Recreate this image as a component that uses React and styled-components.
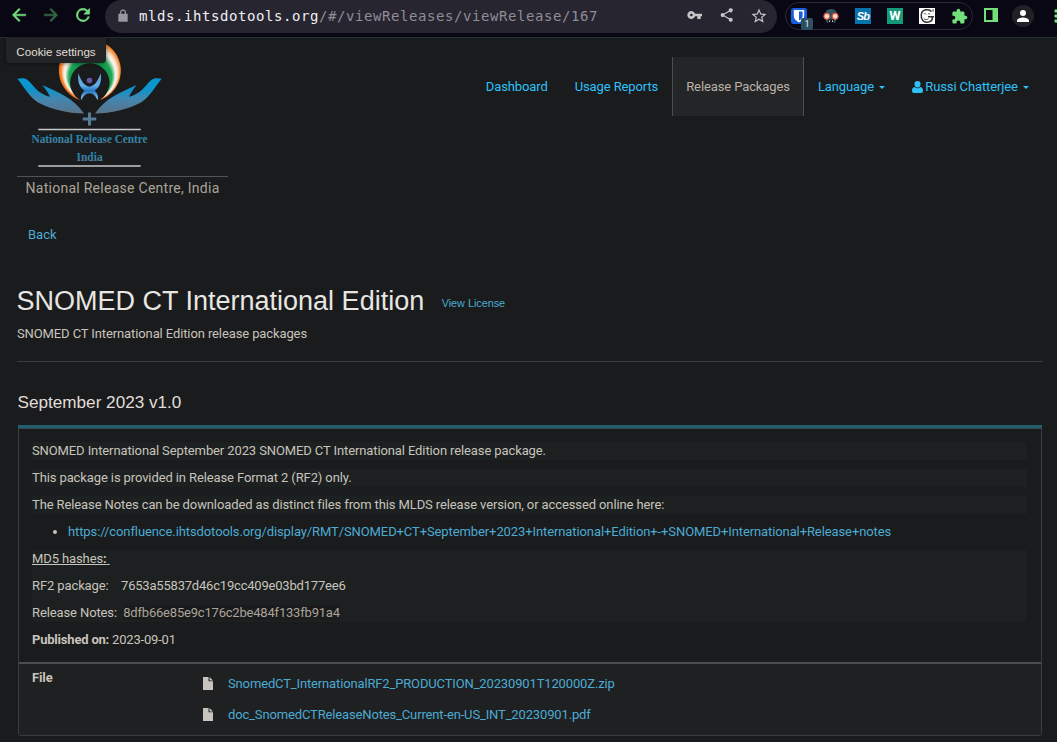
import React from "react";
import styled, { createGlobalStyle } from "styled-components";

const Global = createGlobalStyle`
  *, *::before, *::after { box-sizing: border-box; }
  body {
    margin: 0;
    background: #1a1b1c;
    color: #c8c3bc;
    font-family: Roboto, "Liberation Sans", sans-serif;
    font-size: 13px;
    line-height: 18px;
    letter-spacing: -0.11px;
    overflow: hidden;
  }
  p, h1, h2, ul { margin: 0; }
  a { color: #4cabd3; text-decoration: none; }
`;

const Screen = styled.div`
  width: 1057px;
  height: 742px;
  overflow: hidden;
`;

const Toolbar = styled.header`
  display: flex;
  align-items: flex-start;
  height: 38px;
  background: #0a0715;
  border-bottom: 1px solid #26302f;
  overflow: hidden;
`;

const NavButtons = styled.div`
  display: flex;
  width: 105px;
  padding: 5px 0 0 9px;
  gap: 12px;
  flex: none;
`;

const Icon = styled.svg`
  display: block;
  flex: none;
  width: ${(p) => p.$s || 20}px;
  height: ${(p) => p.$s || 20}px;
  fill: ${(p) => p.$c || "#72df7a"};
`;

const AddressBar = styled.div`
  display: flex;
  align-items: center;
  width: 672px;
  height: 33px;
  padding: 0 9px 1px 11px;
  border-radius: 17px;
  background: #272530;
  flex: none;
`;

const Url = styled.span`
  flex: 1;
  margin-left: 9px;
  font-family: "DejaVu Sans Mono", monospace;
  font-size: 14px;
  letter-spacing: 0.57px;
  color: #8f8d96;
  white-space: nowrap;
  b { font-weight: 400; color: #f0eff3; }
`;

const AddressActions = styled.div`
  display: flex;
  gap: 16px;
`;

const Extensions = styled.div`
  display: flex;
  align-items: center;
  gap: 16px;
  width: 188px;
  height: 28px;
  margin: 2px 0 0 8px;
  padding-left: 5px;
  border: 1px solid #2b2935;
  border-radius: 14px;
  flex: none;
`;

const ExtSlot = styled.span`
  position: relative;
  display: block;
  width: 16px;
  height: 16px;
  flex: none;
`;

const CountBadge = styled.span`
  position: absolute;
  left: 10px;
  top: 10px;
  width: 12px;
  height: 12px;
  border-radius: 2px;
  background: #2c505f;
  color: #e8eef0;
  font-size: 9px;
  line-height: 12px;
  text-align: center;
`;

const LetterTile = styled.span`
  display: block;
  width: 16px;
  height: 16px;
  background: ${(p) => p.$bg};
  color: ${(p) => p.$c || "#fff"};
  font: ${(p) => p.$font};
  line-height: 16px;
  letter-spacing: ${(p) => p.$ls || 0};
  text-align: center;
`;

const BrowserTail = styled.div`
  display: flex;
  align-items: center;
  margin: 4px 0 0 8px;
  height: 24px;
`;

const Avatar = styled.span`
  display: grid;
  place-items: center;
  width: 22px;
  height: 22px;
  margin-left: 11px;
  border-radius: 50%;
  background: #202124;
`;

const MenuDots = styled(Icon)`
  margin-left: 14px;
`;

const Page = styled.main`
  position: relative;
  height: 704px;
  padding: 0 15px 0 17px;
`;

const CookieButton = styled.button`
  position: absolute;
  left: 6px;
  top: 0;
  width: 100px;
  height: 25px;
  padding: 2px 0 1px;
  border: 0;
  border-radius: 0 0 4px 4px;
  background: #222425;
  box-shadow: 0 0 4px rgba(0, 0, 0, 0.6);
  color: #e0ddd9;
  font: 11.6px "Liberation Sans", sans-serif;
  white-space: nowrap;
`;

const Masthead = styled.div`
  display: flex;
  justify-content: space-between;
  height: 170px;
`;

const Brand = styled.div`
  width: 211px;
`;

const LogoMark = styled.svg`
  display: block;
  width: 146px;
  height: 138px;
`;

const BrandName = styled.div`
  border-top: 1px solid #505356;
  padding: 2px 0 0 8.5px;
  font-size: 14px;
  letter-spacing: 0.27px;
  color: #aba499;
  white-space: nowrap;
`;

const MainNav = styled.nav`
  display: flex;
  height: 59px;
  margin-top: 19px;
`;

const NavItem = styled.a`
  display: flex;
  align-items: center;
  height: 59px;
  padding: 0 13.5px;
  border: solid #4b4e50;
  border-width: ${(p) => (p.$active ? "0 1px" : "0")};
  background: ${(p) => (p.$active ? "#242527" : "transparent")};
  color: ${(p) => (p.$active ? "#b8b1a8" : "#2fc0f8")};
  white-space: nowrap;
`;

const Caret = styled.span`
  margin: 2px 0 0 4.6px;
  border: solid transparent;
  border-width: 3px 3px 0;
  border-top-color: currentColor;
`;

const UserGlyph = styled.svg`
  width: 11px;
  height: 12px;
  margin-right: 2.7px;
  fill: currentColor;
`;

const BackLink = styled.a`
  display: block;
  width: fit-content;
  margin: 18px 0 0 11px;
  letter-spacing: 0;
`;

const TitleRow = styled.div`
  display: flex;
  align-items: flex-start;
  gap: 17.5px;
  margin: 41px 0 0 -0.5px;
  font-family: "Liberation Sans", sans-serif;
  letter-spacing: 0;
`;

const Title = styled.h1`
  font-size: 27px;
  font-weight: 400;
  line-height: 32px;
  color: #e8e6e3;
  white-space: nowrap;
`;

const LicenseLink = styled.a`
  margin-top: 9px;
  font-size: 10.8px;
`;

const Summary = styled.p`
  margin-top: 8px;
  padding-bottom: 18px;
  border-bottom: 1px solid #3a3d3f;
  width: 1026px;
`;

const VersionTitle = styled.h2`
  margin: 30px 0 0 0.5px;
  font: 17.15px/20px "Liberation Sans", sans-serif;
  letter-spacing: 0;
  color: #e0ddd9;
`;

const ReleasePanel = styled.section`
  width: 1024px;
  margin: 13px 0 0 1px;
  border: 1px solid #3a3d3f;
  border-top: 0;
  border-radius: 0 0 3px 3px;
`;

const PanelAccent = styled.div`
  height: 4px;
  margin: 0 -1px;
  background: #235e6f;
  border-bottom: 1px solid #36474d;
`;

const Notes = styled.div`
  height: 233px;
  padding: 13px 14px 0 13px;
`;

const Line = styled.p`
  height: 18px;
  margin-bottom: 9px;
  background: #1c2020;
  white-space: pre;
`;

const LinkList = styled.ul`
  height: 18px;
  margin-bottom: 9px;
  padding-left: 36px;
  letter-spacing: -0.1px;
`;

const Hashes = styled.div`
  height: 72px;
  margin-bottom: 8px;
  background: #1c2020;
  white-space: pre;
  p { height: 27px; }
`;

const Underlined = styled.span`
  text-decoration: underline;
`;

const Digest = styled.span`
  letter-spacing: -0.2px;
  background: ${(p) => (p.$muted ? "#1a1b1c" : "transparent")};
  color: ${(p) => (p.$muted ? "#aba499" : "inherit")};
`;

const Published = styled.p`
  padding-top: 1px;
  letter-spacing: -0.2px;
`;

const Files = styled.div`
  display: flex;
  height: 73px;
  padding: 5px 13px 0;
  border-top: 2px solid #4a4d4f;
  background: #1f2021;
`;

const FilesLabel = styled.strong`
  width: 171px;
  font-weight: 700;
`;

const FileList = styled.div`
  display: flex;
  flex-direction: column;
  gap: 13px;
  padding-top: 6px;
  letter-spacing: -0.145px;
`;

const FileRow = styled.div`
  display: flex;
  align-items: center;
  gap: 15px;
  height: 18px;
`;

const FileGlyph = styled.svg`
  width: 10px;
  height: 13px;
  margin-bottom: 2px;
  fill: #c8c3bc;
`;

const Hand = "M17.3 78.7 C20 78.2 23 77.8 25.5 78.7 C33 82.5 34.5 92.5 50 96.7 C48 92.5 45 88 42.3 85 C59 92.5 73 98 84 113.4 C67 113.4 52 109.5 38 102.5 C27.5 95 25 87.5 17.3 78.7Z";

function ReleaseCentreLogo() {
  return (
    <LogoMark viewBox="17 38 146 138">
      <defs>
        <radialGradient id="tricolour" gradientUnits="userSpaceOnUse" cx="90.7" cy="70" r="31" fx="90.2" fy="81" fr="17">
          <stop offset="0" stopColor="#089447" />
          <stop offset="0.32" stopColor="#1fa858" />
          <stop offset="0.58" stopColor="#f6f6ee" />
          <stop offset="0.7" stopColor="#fbe6d2" />
          <stop offset="0.9" stopColor="#f58a35" />
          <stop offset="1" stopColor="#ee7420" />
        </radialGradient>
        <linearGradient id="hand" gradientUnits="userSpaceOnUse" x1="0" y1="78" x2="0" y2="125">
          <stop offset="0" stopColor="#0797d3" />
          <stop offset="0.23" stopColor="#0c94cc" />
          <stop offset="0.45" stopColor="#4386b0" />
          <stop offset="0.75" stopColor="#5a7388" />
          <stop offset="1" stopColor="#557d96" />
        </linearGradient>
        <linearGradient id="figure" x1="0" y1="0" x2="0" y2="1">
          <stop offset="0" stopColor="#5e9bd3" />
          <stop offset="0.45" stopColor="#62aee8" />
          <stop offset="0.65" stopColor="#2376c4" />
          <stop offset="1" stopColor="#a3cdf0" />
        </linearGradient>
        <linearGradient id="wordmark" x1="0" y1="0" x2="0" y2="1">
          <stop offset="0.2" stopColor="#168bbd" />
          <stop offset="0.85" stopColor="#527c99" />
        </linearGradient>
      </defs>
      <path fill="url(#tricolour)" d="M80 100 A31 31 0 1 1 99.7 100 A19.7 19.7 0 1 0 80 100Z" />
      <path fill="url(#hand)" d={Hand} />
      <path fill="url(#hand)" d={Hand} transform="matrix(-1 0 0 1 179 0)" />
      <circle cx="89.5" cy="80.5" r="2.8" fill="#6558a5" />
      <path fill="url(#figure)" d="M78.3 73.3 C80.500 78 82.500 85.500 89.500 86.800 C96.500 85.500 98.500 78 100.900 73.300 C101.800 82 99.500 87.500 94.800 90.700 C97.800 93.500 98.800 96.500 97.500 100.300 C95.800 96.200 93.500 93.400 89.500 93.300 C85.500 93.400 83.200 96.200 81.300 100.300 C80.200 96.500 81.500 93.500 84.500 90.700 C79.500 87.500 77.300 82 78.300 73.300Z" />
      <path fill="#557d96" d="M88 112.4h3v5.1h5.3v3H91v5.1h-3v-5.1h-5.3v-3H88z" />
      <path fill="#c5c9cb" d="M38.3 128.8h102.4v1.5H38.3zM38.3 165.2h102.4v1.5H38.3z" />
      <g fill="url(#wordmark)" fontFamily="'Liberation Serif', serif" fontWeight="700" fontSize="11.5" letterSpacing="0" textAnchor="middle">
        <text x="89.6" y="143.3" textLength="116" lengthAdjust="spacingAndGlyphs">National Release Centre</text>
        <text x="89.6" y="160.6" textLength="26" lengthAdjust="spacingAndGlyphs">India</text>
      </g>
    </LogoMark>
  );
}

function DocumentGlyph() {
  return (
    <FileGlyph viewBox="0 0 10 13">
      <path d="M0 0h5.500v4.300H10V13H0zM6.500 0L10 3.400H6.500z" />
    </FileGlyph>
  );
}

function BrowserToolbar() {
  return (
    <Toolbar>
      <NavButtons>
        <Icon viewBox="0 0 24 24"><path stroke="#72df7a" strokeWidth=".6" d="M20 11H7.83l5.59-5.59L12 4l-8 8 8 8 1.41-1.41L7.83 13H20z" /></Icon>
        <Icon viewBox="0 0 24 24" $c="#376a45"><path stroke="#376a45" strokeWidth=".6" d="M4 11h12.17l-5.59-5.59L12 4l8 8-8 8-1.41-1.41L16.17 13H4z" /></Icon>
        <Icon viewBox="0 0 24 24"><path stroke="#72df7a" strokeWidth=".6" d="M17.65 6.35A8 8 0 1 0 19.73 14h-2.08A6 6 0 1 1 12 6c1.66 0 3.14.69 4.22 1.78L13 11h7V4z" /></Icon>
      </NavButtons>
      <AddressBar>
        <Icon viewBox="0 0 24 24" $s={14} $c="#9998a0"><path d="M18 8h-1V6A5 5 0 0 0 7 6v2H4v14h16V8zM9 6a3 3 0 0 1 6 0v2H9z" /></Icon>
        <Url><b>mlds.ihtsdotools.org</b>/#/viewReleases/viewRelease/167</Url>
        <AddressActions>
          <Icon viewBox="-1 0 24 24" $s={16} $c="#c5c4c7"><path d="M12.65 10A6 6 0 1 0 12.65 14H16v4h5v-4h2v-4zM7 14a2 2 0 1 1 0-4 2 2 0 0 1 0 4z" /></Icon>
          <Icon viewBox="-1 0 24 24" $s={16} $c="#c5c4c7"><path d="M18 16.1c-.8 0-1.4.3-2 .8l-7.1-4.2a3 3 0 0 0 0-1.4L16 7.2A3 3 0 1 0 15 5l.1.7L8 9.8a3 3 0 1 0 0 4.4l7.1 4.2A3 3 0 1 0 18 16.1z" /></Icon>
          <Icon viewBox="0 0 24 24" $s={18} $c="#c5c4c7"><path d="m22 9.24-7.19-.62L12 2 9.19 8.63 2 9.24l5.46 4.73L5.82 21 12 17.27 18.18 21l-1.63-7.03zM12 15.4l-3.76 2.27 1-4.28-3.32-2.88 4.38-.38L12 6.1l1.71 4.04 4.38.38-3.32 2.88 1 4.28z" /></Icon>
        </AddressActions>
      </AddressBar>
      <Extensions>
        <ExtSlot>
          <Icon viewBox="0 0 16 16" $s={16} $c="#175ddc">
            <rect width="16" height="16" rx="2.5" />
            <path fill="#fff" d="M2.8 2h10.4v6c0 3-2.4 5-5.2 6.5C5.200 13 2.800 11 2.800 8z" />
            <path d="M8 3.600h3.600V8c0 1.900-1.500 3.400-3.600 4.600z" />
          </Icon>
          <CountBadge>1</CountBadge>
        </ExtSlot>
        <Icon viewBox="0 0 16 16" $s={16} $c="#31545c">
          <path d="M2 7C2 3 4.500 1 8 1s6 2 6 6v3l-2 5H4l-2-5z" />
          <path fill="#10131d" d="M5 11.500h6V15H5z" />
          <circle cx="3.800" cy="8.300" r="2.900" fill="#f8dcd2" stroke="#d9533f" strokeWidth="1.100" />
          <circle cx="12.200" cy="8.300" r="2.900" fill="#f8dcd2" stroke="#d9533f" strokeWidth="1.100" />
          <path fill="#d8dee0" d="M6 12.500h1V14H6zM9 12.500h1V14H9z" />
        </Icon>
        <LetterTile $bg="#0673ab" $font="italic 700 11px 'Liberation Sans', sans-serif" $ls="-0.8px">Sb</LetterTile>
        <LetterTile $bg="#159a78" $font="700 13px Roboto, sans-serif">W</LetterTile>
        <Icon viewBox="0 0 16 16" $s={16} $c="#fff">
          <path d="M0 0h16v16H0z" />
          <path fill="none" stroke="#303030" strokeWidth="1.500" d="M12.500 3.500C10 .6 3 1 2.300 6.500S5 14.500 8 14.200c3 0 5.500-1.500 5.500-5.200M9 8.800h6" />
          <path fill="none" stroke="#555" d="M5 6.300c0-1 2-1 2 0M9 6.300c0-1 2-1 2 0M4.500 10c1.500 2 3.500 2 5 .8M14 1v3" />
        </Icon>
        <Icon viewBox="0 0 24 24" $s={17}><path d="M20.500 11H19V7c0-1.100-.9-2-2-2h-4V3.500a2.500 2.500 0 0 0-5 0V5H4c-1.100 0-2 .9-2 2v3.800h1.500a2.700 2.700 0 0 1 0 5.400H2V20c0 1.100.9 2 2 2h3.800v-1.500a2.700 2.700 0 0 1 5.400 0V22H17c1.100 0 2-.9 2-2v-4h1.500a2.500 2.500 0 0 0 0-5z" /></Icon>
      </Extensions>
      <BrowserTail>
        <Icon viewBox="0 0 20 20" $s={20}><path fillRule="evenodd" d="M3 2h14v14H3zM5 4v10h6.500V4z" /></Icon>
        <Avatar><Icon viewBox="0 0 24 24" $s={18} $c="#fff"><path d="M12 12a4 4 0 1 0 0-8 4 4 0 0 0 0 8zm0 2c-2.700 0-8 1.300-8 4v2h16v-2c0-2.700-5.300-4-8-4z" /></Icon></Avatar>
        <MenuDots viewBox="0 0 20 20" $s={20}><circle cx="8" cy="5" r="1.700" /><circle cx="8" cy="10" r="1.700" /><circle cx="8" cy="15" r="1.700" /></MenuDots>
      </BrowserTail>
    </Toolbar>
  );
}

export default function App() {
  return (
    <Screen>
      <Global />
      <BrowserToolbar />
      <Page>
        <Masthead>
          <Brand>
            <ReleaseCentreLogo />
            <BrandName>National Release Centre, India</BrandName>
          </Brand>
          <MainNav>
            <NavItem>Dashboard</NavItem>
            <NavItem>Usage Reports</NavItem>
            <NavItem $active>Release Packages</NavItem>
            <NavItem>Language<Caret /></NavItem>
            <NavItem>
              <UserGlyph viewBox="0 0 11 12"><path d="M5.500 0a3 3 0 0 1 3 3.200c0 2-1.300 3.400-3 3.400s-3-1.400-3-3.400A3 3 0 0 1 5.500 0zM2.600 5.900c1.700 1.900 4.100 1.900 5.800 0C10.200 6.200 11 7.500 11 10c0 1.300-.8 2-2 2H2c-1.200 0-2-.7-2-2 0-2.500.8-3.800 2.600-4.100z" /></UserGlyph>
              Russi Chatterjee<Caret />
            </NavItem>
          </MainNav>
        </Masthead>
        <CookieButton>Cookie settings</CookieButton>
        <BackLink>Back</BackLink>
        <TitleRow>
          <Title>SNOMED CT International Edition</Title>
          <LicenseLink>View License</LicenseLink>
        </TitleRow>
        <Summary>SNOMED CT International Edition release packages</Summary>
        <VersionTitle>September 2023 v1.0</VersionTitle>
        <ReleasePanel>
          <PanelAccent />
          <Notes>
            <Line>SNOMED International September 2023 SNOMED CT International Edition release package.</Line>
            <Line>This package is provided in Release Format 2 (RF2) only.</Line>
            <Line>The Release Notes can be downloaded as distinct files from this MLDS release version, or accessed online here:</Line>
            <LinkList>
              <li><a>https://confluence.ihtsdotools.org/display/RMT/SNOMED+CT+September+2023+International+Edition+-+SNOMED+International+Release+notes</a></li>
            </LinkList>
            <Hashes>
              <p><Underlined>MD5 hashes<b>:</b>{"\u00a0"}</Underlined></p>
              <p>{"RF2 package:\u00a0 \u00a0 "}<Digest>7653a55837d46c19cc409e03bd177ee6</Digest></p>
              <p>{"Release Notes:\u00a0 "}<Digest $muted>8dfb66e85e9c176c2be484f133fb91a4</Digest></p>
            </Hashes>
            <Published><b>Published on:</b> 2023-09-01</Published>
          </Notes>
          <Files>
            <FilesLabel>File</FilesLabel>
            <FileList>
              <FileRow><DocumentGlyph /><a>SnomedCT_InternationalRF2_PRODUCTION_20230901T120000Z.zip</a></FileRow>
              <FileRow><DocumentGlyph /><a>doc_SnomedCTReleaseNotes_Current-en-US_INT_20230901.pdf</a></FileRow>
            </FileList>
          </Files>
        </ReleasePanel>
      </Page>
    </Screen>
  );
}
